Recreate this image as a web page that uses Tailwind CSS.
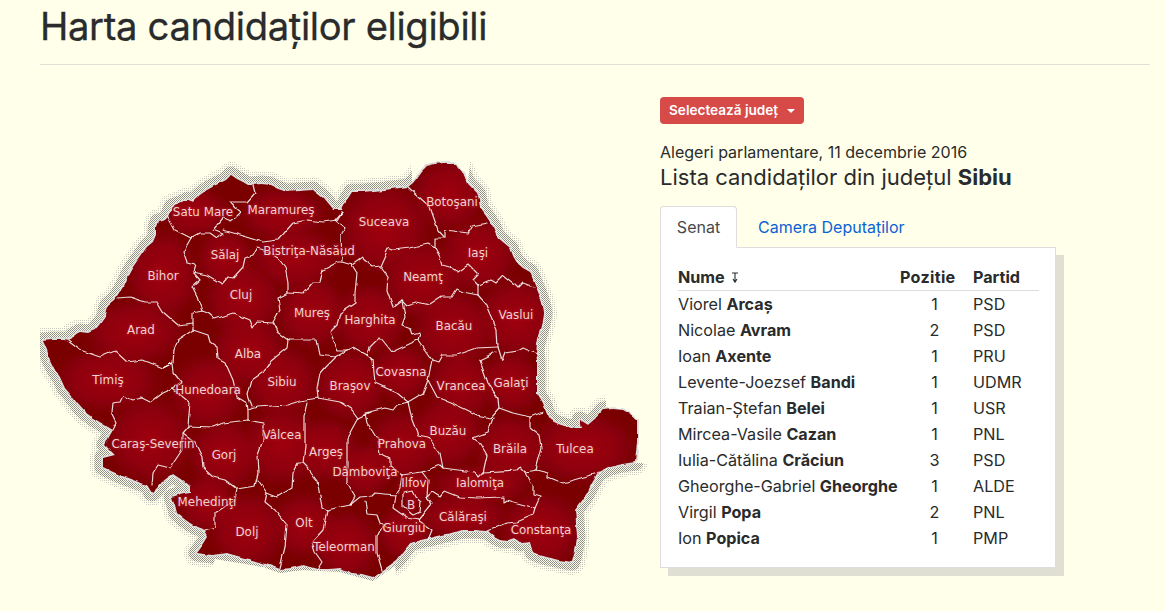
<!DOCTYPE html>
<html lang="en">
<head>
    <meta charset="UTF-8">
    <title>Harta candidaților eligibili</title>
    <script src="https://cdn.jsdelivr.net/npm/@tailwindcss/browser@4"></script>
</head>
<body class="bg-[#ffffea] font-['Inter','Liberation_Sans',sans-serif] text-[#292b2c] overflow-hidden">
<div class="w-[1165px] h-[611px] px-[40px] pr-[15px]">
    <h1 class="text-[38.2px] leading-[46px] pt-[3px] pb-[15px] border-b border-[#e0e0d8] tracking-[-0.35px] [-webkit-text-stroke:0.3px_#292b2c]">Harta candidaților eligibili</h1>
    <div class="flex">
        <!-- harta -->
        <svg class="block w-[620px] h-[546px] shrink-0" viewBox="40 65 620 546" xmlns="http://www.w3.org/2000/svg">
            <defs>
                <path id="ro" d="M43 341L52 340L63 340L68 341L74 335L80 332L88 333L95 330L100 324L105 317L106 310L108 305L114 300L118 295L123 287L127 278L130 272L133 267L140 257L147 247L153 242L156 235L156 228L158 222L165 220L168 217L170 212L172 207L180 204L188 200L193 202L200 195L207 190L214 186L220 183L226 180L231 175L237 179L243 182L248 185L253 185L262 184L270 185L278 189L287 192L300 191L313 190L318 194L323 198L328 204L333 210L342 210L347 200L352 192L363 192L385 190L408 187L413 183L417 178L422 171L427 166L435 164L443 163L453 163L458 167L463 173L465 178L467 183L472 188L477 193L479 200L480 208L486 216L492 225L495 232L498 238L504 243L510 248L513 256L517 263L523 268L530 272L534 282L538 292L541 300L543 307L544 313L543 320L540 332L537 343L536 352L537 360L537 378L537 393L540 398L543 403L546 412L550 420L558 424L567 427L575 429L582 429L580 420L588 425L596 418L603 410L613 409L623 410L630 414L637 420L637 432L637 443L636 452L635 462L622 464L610 467L604 470L598 473L592 483L587 493L581 502L575 510L576 524L577 537L575 550L572 562L560 560L547 557L540 555L533 552L530 542L520 543L513 538L507 540L500 539L494 536L488 531L475 530L463 530L446 534L430 538L420 540L410 543L403 552L397 560L390 565L383 570L373 577L362 574L353 573L346 570L340 568L328 569L317 569L310 567L303 565L292 568L280 569L272 566L263 563L245 558L227 553L212 555L197 553L203 545L208 537L205 530L197 527L190 523L183 518L177 513L175 505L172 497L181 494L190 492L190 487L182 480L173 474L167 478L162 482L157 488L152 493L147 485L133 480L120 475L111 471L103 467L103 458L115 455L110 450L105 445L109 437L113 430L103 424L93 418L85 412L77 403L72 396L65 388L60 377L55 370L50 360L47 350Z"/>
                <clipPath id="roClip"><use href="#ro"/></clipPath>
                <clipPath id="haloClip"><polygon points="20,140 412,140 412,183 468,183 472,140 660,140 660,380 606,380 606,463 660,463 660,600 400,600 395,566 373,581 340,572 303,570 280,573 263,567 215,559 200,600 20,600"/></clipPath>
                <radialGradient id="glow">
                    <stop offset="0" stop-color="#a00008"/>
                    <stop offset="0.6" stop-color="#980008" stop-opacity="0.7"/>
                    <stop offset="1" stop-color="#900008" stop-opacity="0"/>
                </radialGradient>
                <pattern id="dotsA" width="2" height="2" patternUnits="userSpaceOnUse">
                    <rect width="1" height="1" fill="#8a8a86"/>
                    <rect x="1" y="1" width="1" height="1" fill="#989894"/>
                </pattern>
                <pattern id="dotsB" width="2" height="2" patternUnits="userSpaceOnUse">
                    <rect width="1" height="1" fill="#c8c8bc"/>
                </pattern>
                <filter id="rough" x="-5%" y="-5%" width="110%" height="110%">
                    <feTurbulence type="fractalNoise" baseFrequency="0.09" numOctaves="2" seed="4"/>
                    <feDisplacementMap in="SourceGraphic" scale="4" xChannelSelector="R" yChannelSelector="G"/>
                </filter>
            </defs>

            <!-- umbra punctata -->
            <g clip-path="url(#haloClip)">
                <use href="#ro" fill="none" stroke="url(#dotsB)" stroke-width="26" stroke-linejoin="round"/>
                <use href="#ro" fill="none" stroke="url(#dotsA)" stroke-width="17" stroke-linejoin="round"/>
            </g>

            <g filter="url(#rough)">
                <use href="#ro" fill="#fffff0" stroke="#dcdcdc" stroke-width="3.5" stroke-linejoin="round"/>
                <use href="#ro" fill="#7a0006"/>

                <g clip-path="url(#roClip)" fill="url(#glow)">
                    <ellipse cx="195" cy="212" rx="36" ry="26"/><ellipse cx="282" cy="214" rx="46" ry="28"/>
                    <circle cx="384" cy="228" r="48"/><circle cx="448" cy="195" r="38"/>
                    <circle cx="225" cy="258" r="30"/><ellipse cx="295" cy="258" rx="48" ry="32"/>
                    <circle cx="478" cy="255" r="40"/><circle cx="423" cy="280" r="42"/>
                    <ellipse cx="163" cy="275" rx="38" ry="48"/><circle cx="243" cy="298" r="40"/>
                    <circle cx="516" cy="318" r="42"/><circle cx="312" cy="312" r="38"/>
                    <circle cx="370" cy="320" r="38"/><circle cx="454" cy="330" r="42"/>
                    <ellipse cx="135" cy="332" rx="52" ry="34"/><circle cx="248" cy="350" r="38"/>
                    <circle cx="401" cy="372" r="30"/><ellipse cx="108" cy="380" rx="56" ry="34"/>
                    <circle cx="282" cy="382" r="38"/><circle cx="350" cy="385" r="38"/>
                    <circle cx="461" cy="385" r="35"/><circle cx="511" cy="383" r="33"/>
                    <circle cx="208" cy="392" r="40"/><circle cx="282" cy="445" r="42"/>
                    <circle cx="326" cy="450" r="34"/><circle cx="402" cy="445" r="36"/>
                    <circle cx="448" cy="432" r="38"/><circle cx="510" cy="450" r="38"/>
                    <ellipse cx="582" cy="448" rx="56" ry="38"/><circle cx="150" cy="440" r="46"/>
                    <circle cx="224" cy="455" r="38"/><circle cx="365" cy="470" r="28"/>
                    <circle cx="414" cy="487" r="20"/><ellipse cx="480" cy="485" rx="52" ry="22"/>
                    <circle cx="207" cy="503" r="30"/><ellipse cx="463" cy="517" rx="48" ry="24"/>
                    <circle cx="404" cy="532" r="28"/><ellipse cx="541" cy="530" rx="44" ry="40"/>
                    <circle cx="247" cy="530" r="40"/><circle cx="304" cy="525" r="34"/>
                    <circle cx="346" cy="545" r="36"/>
                </g>

                <!-- granite judete -->
                <g fill="none" stroke="#fff" stroke-opacity="0.85" stroke-width="1.2" stroke-linejoin="round" stroke-linecap="round">
                    <polyline points="168,217 175,230 191,238 200,233 210,233 217,238 223,234 213,230 223,218 230,221 234,218 240,212 235,208 230,202 247,202 255,193 253,185"/>
                    <polyline points="223,230 247,237 263,242 278,240 293,223 307,220 323,222 337,220 342,212"/>
                    <polyline points="191,238 183,252 187,263 195,265 193,272 207,275 222,284 228,277 233,278 243,267 245,258 253,255 257,248 264,250"/>
                    <polyline points="264,250 278,258 285,267 288,283 288,293 278,298 280,310 273,322 277,332 288,340 287,348 272,360 267,368 262,373 252,380 248,395 252,407"/>
                    <polyline points="193,272 200,280 192,287 197,297 202,311"/>
                    <polyline points="193,330 193,313 202,311 208,313 215,319 233,313 250,320 253,328 257,322 273,323"/>
                    <polyline points="288,293 303,294 313,282 320,282 323,270 338,262 342,262 352,265"/>
                    <polyline points="342,212 335,220 345,228 341,235 342,262"/>
                    <polyline points="352,265 362,258 373,267 380,266 388,248 393,250 410,248 428,244 435,248"/>
                    <polyline points="408,187 430,207 438,230 445,238 435,238 435,248"/>
                    <polyline points="445,238 445,230 468,233 472,226 487,223"/>
                    <polyline points="435,248 440,257 442,265 450,267 458,272 468,265 478,275 473,280 478,285"/>
                    <polyline points="478,285 490,280 495,283 503,275 513,283 518,288 523,283 534,287"/>
                    <polyline points="478,285 478,295 463,292 457,289 452,297 442,297 430,305 417,302 407,305 402,300"/>
                    <polyline points="478,295 485,303 497,330 498,347 502,360 505,352 518,350 523,347 537,353"/>
                    <polyline points="380,266 388,277 387,290 393,307 402,300 405,317 402,325 410,328 412,335 420,333 418,340 432,360 428,380 437,397 450,402 467,410 477,415 490,418 499,408"/>
                    <polyline points="352,265 357,273 355,293 355,303 340,313 337,325 330,332 338,350 347,350 353,347 367,355 370,347 380,337 392,352 418,340"/>
                    <polyline points="288,340 317,340 320,355 335,357 347,350"/>
                    <polyline points="367,355 373,360 375,383 397,393 408,402 423,393 428,380"/>
                    <polyline points="432,360 438,362 442,355 457,355 477,348 498,347"/>
                    <polyline points="480,360 488,383 498,398 499,408 513,413 530,417 543,412"/>
                    <polyline points="479,360 496,352"/>
                    <polyline points="530,417 530,427 540,435 542,447 536,470"/>
                    <polyline points="493,418 488,432 473,438 480,443 487,455 483,473"/>
                    <polyline points="408,402 412,420 418,435 428,437 440,453 443,468"/>
                    <polyline points="408,402 397,405 393,410 385,408 365,413 367,423 378,440 380,453 390,458 390,467 402,475"/>
                    <polyline points="402,475 422,472 440,465 443,468 458,470 475,472 478,477 483,472 517,470 520,467 525,472 536,470"/>
                    <polyline points="525,472 533,485 533,495 540,497 535,508"/>
                    <polyline points="427,497 432,492 440,497 445,491 460,497 477,498 503,497 503,503 507,500 535,508 533,515 517,522 507,523 488,531"/>
                    <polyline points="536,470 548,473 548,477 563,483 598,473"/>
                    <polyline points="402,475 400,488 395,495 393,508 407,518 418,520 432,503 427,497 428,480 422,472"/>
                    <polygon points="403,493 412,491 415,497 421,502 420,512 413,515 403,507"/>
                    <polyline points="395,495 375,493 372,496 360,497 350,505"/>
                    <polyline points="365,501 367,514 377,515 380,523 388,528"/>
                    <polyline points="382,526 377,537 377,553 382,570"/>
                    <polyline points="418,520 432,530 428,540"/>
                    <polyline points="358,418 347,438 347,483 355,497 350,505 327,510 323,530 312,542 315,552 322,562 317,570"/>
                    <polyline points="248,420 248,410 257,407 287,405 300,401 318,398 340,402 352,410 358,418 370,412"/>
                    <polyline points="308,402 305,417 305,447 303,463 308,468 317,480 322,507 327,510"/>
                    <polyline points="303,463 298,463 293,473 292,488 277,497 267,493 258,480"/>
                    <polyline points="267,493 265,502 275,510 287,525 285,547 280,568"/>
                    <polyline points="248,420 223,423 213,427 188,426 182,433 195,443 202,457 203,468 213,477 225,480 237,489"/>
                    <polyline points="248,420 263,423 263,440 257,457 258,473 255,486 237,489 235,500 215,513 215,527 205,530"/>
                    <polyline points="182,433 182,450 170,468 158,465 153,473 152,485"/>
                    <polyline points="188,426 190,403 183,397 173,388 162,393 150,402 142,398 133,400 123,396 120,402 113,403 112,412 117,422 113,430"/>
                    <polyline points="173,388 182,383 173,372 172,363 163,368"/>
                    <polyline points="68,341 80,350 100,357 115,351 127,362 143,360 163,368 173,363 174,350 178,340 193,330 208,335 210,342 217,347 218,358 225,362 233,380 237,397 247,403 248,410"/>
                    <polyline points="118,298 130,297 145,302 157,302 163,312 178,325 193,323"/>
                    <polyline points="335,357 325,367 320,373 317,388 318,398"/>
                </g>
            </g>

            <!-- nume judete -->
            <g font-family="'DejaVu Sans',sans-serif" font-size="11.9" fill="#f3d2d2" text-anchor="middle" stroke="#a5101c" stroke-opacity="0.55" stroke-width="3" paint-order="stroke">
                <text x="203" y="216">Satu Mare</text><text x="281" y="214">Maramureş</text>
                <text x="384" y="226">Suceava</text><text x="452" y="206">Botoşani</text>
                <text x="225" y="259">Sălaj</text><text x="309" y="255">Bistriţa-Năsăud</text>
                <text x="478" y="257">Iaşi</text><text x="423" y="281">Neamţ</text>
                <text x="163" y="280">Bihor</text><text x="241" y="299">Cluj</text>
                <text x="516" y="319">Vaslui</text><text x="312" y="317">Mureş</text>
                <text x="370" y="324">Harghita</text><text x="454" y="330">Bacău</text>
                <text x="141" y="334">Arad</text><text x="248" y="358">Alba</text>
                <text x="401" y="376">Covasna</text><text x="108" y="384">Timiş</text>
                <text x="282" y="386">Sibiu</text><text x="350" y="390">Braşov</text>
                <text x="461" y="390">Vrancea</text><text x="511" y="387">Galaţi</text>
                <text x="208" y="394">Hunedoara</text><text x="282" y="439">Vâlcea</text>
                <text x="326" y="456">Argeş</text><text x="402" y="448">Prahova</text>
                <text x="448" y="435">Buzău</text><text x="510" y="453">Brăila</text>
                <text x="575" y="453">Tulcea</text><text x="153" y="448">Caraş-Severin</text>
                <text x="224" y="459">Gorj</text><text x="365" y="476">Dâmboviţa</text>
                <text x="414" y="487">Ilfov</text><text x="480" y="487">Ialomiţa</text>
                <text x="207" y="506">Mehedinţi</text><text x="411" y="509">B</text>
                <text x="463" y="521">Călăraşi</text><text x="404" y="532">Giurgiu</text>
                <text x="541" y="534">Constanţa</text><text x="247" y="536">Dolj</text>
                <text x="304" y="527">Olt</text><text x="344" y="551">Teleorman</text>
            </g>
        </svg>

        <!-- lista -->
        <div class="pt-[32px]">
            <button class="flex items-center h-[27px] w-[144px] px-[9px] bg-[#d64a48] rounded-[4px] text-white text-[13.6px] font-semibold whitespace-nowrap">
                Selectează județ
                <span class="ml-[9px] mt-[1px] border-x-[4px] border-x-transparent border-t-[4px] border-t-white"></span>
            </button>
            <p class="mt-[18px] text-[16.05px] leading-[20px]">Alegeri parlamentare, 11 decembrie 2016</p>
            <h2 class="text-[22px] leading-[30px]">Lista candidaților din județul <b class="font-bold">Sibiu</b></h2>
            <div class="flex mt-[14px] h-[42px] text-[16px] relative z-10">
                <div class="w-[77px] h-[42px] flex items-center justify-center bg-white border border-[#ddd] border-b-white rounded-t-[4px] text-[#464a4c]">Senat</div>
                <a class="ml-[21px] flex items-center text-[#0b62d6]">Camera Deputaților</a>
            </div>
            <div class="w-[396px] h-[321px] -mt-[1px] bg-white border border-[#ddd] shadow-[8px_8px_0_#dfe0d3] px-[17px] pt-[18px]">
                <table class="w-[361px] table-fixed text-[16.15px]">
                    <thead>
                        <tr class="border-b border-[#ddd] h-[24px] font-bold text-left leading-[22px]">
                            <th class="w-[222px] font-bold p-0 align-top"><span class="inline-flex items-center gap-[6px]">Nume
                                <svg width="8" height="11" viewBox="0 0 8 11" fill="none" stroke="#292b2c" stroke-width="1.1"><path d="M1 1H7M4 1V10M2 7L4 10.2L6 7"/></svg></span></th>
                            <th class="w-[73px] font-bold p-0 align-top tracking-[0.3px]">Pozitie</th>
                            <th class="font-bold p-0 align-top">Partid</th>
                        </tr>
                    </thead>
                    <tbody class="[&>tr]:h-[26px] [&_td]:pt-[1px] [&_td]:leading-[24px]">
                        <tr><td>Viorel <b>Arcaș</b></td><td class="text-center pr-[4px]">1</td><td>PSD</td></tr>
                        <tr><td>Nicolae <b>Avram</b></td><td class="text-center pr-[4px]">2</td><td>PSD</td></tr>
                        <tr><td>Ioan <b>Axente</b></td><td class="text-center pr-[4px]">1</td><td>PRU</td></tr>
                        <tr><td>Levente-Joezsef <b>Bandi</b></td><td class="text-center pr-[4px]">1</td><td>UDMR</td></tr>
                        <tr><td>Traian-Ștefan <b>Belei</b></td><td class="text-center pr-[4px]">1</td><td>USR</td></tr>
                        <tr><td>Mircea-Vasile <b>Cazan</b></td><td class="text-center pr-[4px]">1</td><td>PNL</td></tr>
                        <tr><td>Iulia-Cătălina <b>Crăciun</b></td><td class="text-center pr-[4px]">3</td><td>PSD</td></tr>
                        <tr><td>Gheorghe-Gabriel <b>Gheorghe</b></td><td class="text-center pr-[4px]">1</td><td>ALDE</td></tr>
                        <tr><td>Virgil <b>Popa</b></td><td class="text-center pr-[4px]">2</td><td>PNL</td></tr>
                        <tr><td>Ion <b>Popica</b></td><td class="text-center pr-[4px]">1</td><td>PMP</td></tr>
                    </tbody>
                </table>
            </div>
        </div>
    </div>
</div>
</body>
</html>
